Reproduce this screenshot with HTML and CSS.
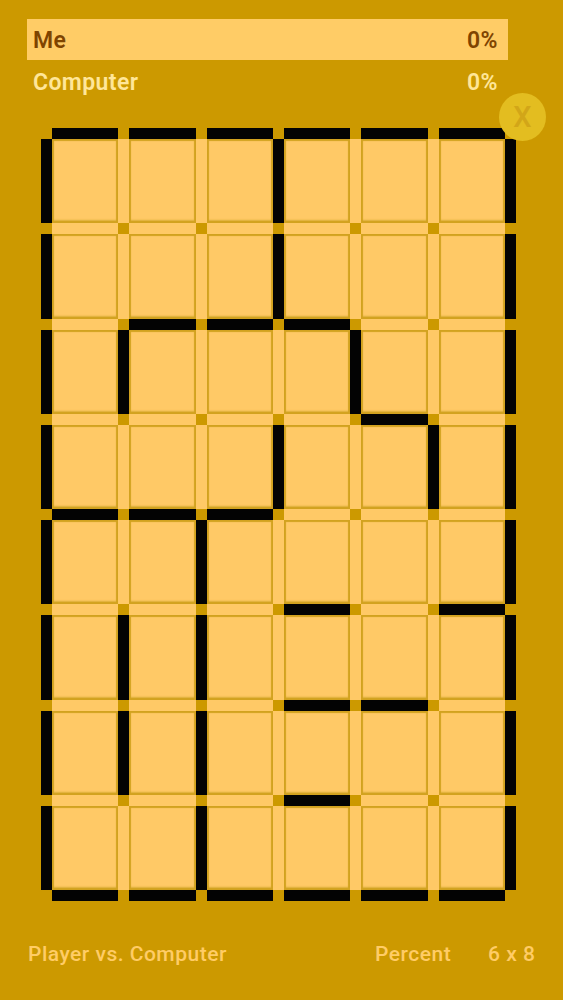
FILE: index.html
```html
<!DOCTYPE html>
<html lang="en">
<head>
<meta charset="utf-8">
<title>Dots and Boxes</title>
<link rel="stylesheet" href="styles.css">
</head>
<body>
<main class="app">
  <section class="scores">
    <div class="score score-me"><span>Me</span><span>0%</span></div>
    <div class="score score-cpu"><span>Computer</span><span>0%</span></div>
  </section>
  <button class="close">X</button>
  <section class="board">
    <i></i><i class="on"></i><i></i><i class="on"></i><i></i><i class="on"></i><i></i><i class="on"></i><i></i><i class="on"></i><i></i><i class="on"></i><i></i>
    <i class="on"></i><b></b><i class="e"></i><b></b><i class="e"></i><b></b><i class="on"></i><b></b><i class="e"></i><b></b><i class="e"></i><b></b><i class="on"></i>
    <i></i><i class="e"></i><i></i><i class="e"></i><i></i><i class="e"></i><i></i><i class="e"></i><i></i><i class="e"></i><i></i><i class="e"></i><i></i>
    <i class="on"></i><b></b><i class="e"></i><b></b><i class="e"></i><b></b><i class="on"></i><b></b><i class="e"></i><b></b><i class="e"></i><b></b><i class="on"></i>
    <i></i><i class="e"></i><i></i><i class="on"></i><i></i><i class="on"></i><i></i><i class="on"></i><i></i><i class="e"></i><i></i><i class="e"></i><i></i>
    <i class="on"></i><b></b><i class="on"></i><b></b><i class="e"></i><b></b><i class="e"></i><b></b><i class="on"></i><b></b><i class="e"></i><b></b><i class="on"></i>
    <i></i><i class="e"></i><i></i><i class="e"></i><i></i><i class="e"></i><i></i><i class="e"></i><i></i><i class="on"></i><i></i><i class="e"></i><i></i>
    <i class="on"></i><b></b><i class="e"></i><b></b><i class="e"></i><b></b><i class="on"></i><b></b><i class="e"></i><b></b><i class="on"></i><b></b><i class="on"></i>
    <i></i><i class="on"></i><i></i><i class="on"></i><i></i><i class="on"></i><i></i><i class="e"></i><i></i><i class="e"></i><i></i><i class="e"></i><i></i>
    <i class="on"></i><b></b><i class="e"></i><b></b><i class="on"></i><b></b><i class="e"></i><b></b><i class="e"></i><b></b><i class="e"></i><b></b><i class="on"></i>
    <i></i><i class="e"></i><i></i><i class="e"></i><i></i><i class="e"></i><i></i><i class="on"></i><i></i><i class="e"></i><i></i><i class="on"></i><i></i>
    <i class="on"></i><b></b><i class="on"></i><b></b><i class="on"></i><b></b><i class="e"></i><b></b><i class="e"></i><b></b><i class="e"></i><b></b><i class="on"></i>
    <i></i><i class="e"></i><i></i><i class="e"></i><i></i><i class="e"></i><i></i><i class="on"></i><i></i><i class="on"></i><i></i><i class="e"></i><i></i>
    <i class="on"></i><b></b><i class="on"></i><b></b><i class="on"></i><b></b><i class="e"></i><b></b><i class="e"></i><b></b><i class="e"></i><b></b><i class="on"></i>
    <i></i><i class="e"></i><i></i><i class="e"></i><i></i><i class="e"></i><i></i><i class="on"></i><i></i><i class="e"></i><i></i><i class="e"></i><i></i>
    <i class="on"></i><b></b><i class="e"></i><b></b><i class="on"></i><b></b><i class="e"></i><b></b><i class="e"></i><b></b><i class="e"></i><b></b><i class="on"></i>
    <i></i><i class="on"></i><i></i><i class="on"></i><i></i><i class="on"></i><i></i><i class="on"></i><i></i><i class="on"></i><i></i><i class="on"></i><i></i>
  </section>
  <footer class="footer">
    <span class="mode">Player vs. Computer</span>
    <span class="metric">Percent</span>
    <span class="size">6 x 8</span>
  </footer>
</main>
</body>
</html>
```
FILE: styles.css
```css
html, body {
  margin: 0;
  height: 100%;
}
body {
  background: #cc9900;
  font-family: Roboto, "Liberation Sans", sans-serif;
  overflow: hidden;
}
.app {
  position: relative;
  display: flex;
  flex-direction: column;
  height: 1000px;
  padding-top: 19px;
  box-sizing: border-box;
}
.scores {
  display: flex;
  flex-direction: column;
  gap: 1px;
  margin: 0 55px 0 27px;
}
.score {
  display: flex;
  justify-content: space-between;
  align-items: center;
  height: 41px;
  box-sizing: border-box;
  padding: 2px 10px 0 6px;
  font-size: 23px;
  font-weight: 600;
  letter-spacing: 0.4px;
}
.score-me {
  background: #ffcc66;
  color: #7f4400;
}
.score-cpu {
  color: #ffe699;
}
.close {
  position: absolute;
  left: 499px;
  top: 93px;
  width: 47px;
  height: 48px;
  padding: 0;
  border: 0;
  border-radius: 50%;
  background: #e3bd20;
  color: #d2a618;
  font: 500 29px Roboto, "Liberation Sans", sans-serif;
  z-index: 2;
}
.board {
  display: grid;
  grid-template-columns: repeat(6, 11px 66.33px) 11px;
  grid-template-rows: repeat(8, 11px 84.25px) 11px;
  margin: 26px 0 0 41px;
}
.board .on {
  background: #030303;
}
.board .e {
  background: #ffc966;
}
.board b {
  background: #ffc966;
  box-shadow: inset 0 0 1px 2px #d2a21f, inset 0 -3px 2px #dcae38;
}
.footer {
  display: flex;
  align-items: center;
  margin: 41px 0 0 28px;
  color: #ffcc66;
  font-size: 21px;
  font-weight: 500;
  letter-spacing: 0.5px;
  white-space: nowrap;
}
.mode {
  width: 347px;
}
.metric {
  width: 113px;
}
```
